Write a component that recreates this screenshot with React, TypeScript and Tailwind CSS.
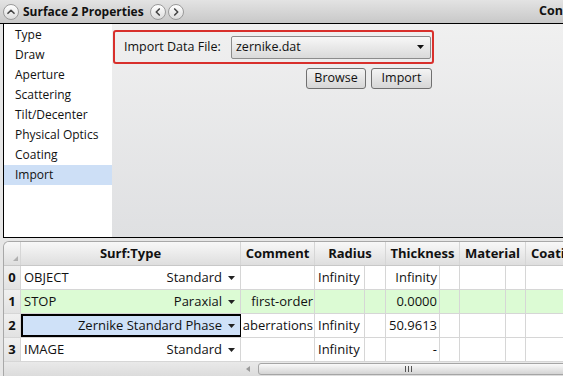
const navItems = ['Type', 'Draw', 'Aperture', 'Scattering', 'Tilt/Decenter', 'Physical Optics', 'Coating', 'Import'];

type Row = {
  n: number;
  label: string;
  type: string;
  comment: string;
  radius: string;
  thickness: string;
  bg: string;
  selected?: boolean;
};

const rows: Row[] = [
  { n: 0, label: 'OBJECT', type: 'Standard', comment: '', radius: 'Infinity', thickness: 'Infinity', bg: 'bg-white' },
  { n: 1, label: 'STOP', type: 'Paraxial', comment: 'first-order', radius: '', thickness: '0.0000', bg: 'bg-[#dcfbd4]' },
  { n: 2, label: '', type: 'Zernike Standard Phase', comment: 'aberrations', radius: 'Infinity', thickness: '50.9613', bg: 'bg-white', selected: true },
  { n: 3, label: 'IMAGE', type: 'Standard', comment: '', radius: 'Infinity', thickness: '-', bg: 'bg-white' },
];

const Caret = () => (
  <svg width="7" height="4" viewBox="0 0 7 4" className="ml-[6px] shrink-0">
    <path d="M0 0 L7 0 L3.5 4 Z" fill="#222" />
  </svg>
);

const CircleBtn = ({ dir }: { dir: 'up' | 'left' | 'right' }) => {
  const d = dir === 'up' ? 'M4.5 9.5 L8 6 L11.5 9.5' : dir === 'left' ? 'M9.5 4.5 L6 8 L9.5 11.5' : 'M6.5 4.5 L10 8 L6.5 11.5';
  return (
    <div className="w-[16px] h-[16px] rounded-full border border-[#9a9a9a] bg-gradient-to-b from-[#ffffff] to-[#dcdcdc] flex items-center justify-center">
      <svg width="16" height="16" viewBox="0 0 16 16">
        <path d={d} fill="none" stroke="#444" strokeWidth="1.8" strokeLinecap="round" strokeLinejoin="round" />
      </svg>
    </div>
  );
};

const cell = 'h-full border-r border-[#d6d6d6] flex items-center shrink-0 whitespace-nowrap overflow-hidden';

export default function App() {
  return (
    <div className="w-[563px] h-[376px] overflow-hidden bg-[#e6e6e6] text-[12px] text-[#111] font-['Open_Sans',sans-serif] leading-none flex flex-col">
      {/* Title bar */}
      <div className="h-[24px] shrink-0 flex items-center bg-gradient-to-b from-[#e3e3e3] to-[#c8c8c8] border-b border-black pl-[3px]">
        <CircleBtn dir="up" />
        <span className="ml-[4px] font-bold text-[12px]">Surface 2 Properties</span>
        <div className="ml-[6px] flex gap-[2px]">
          <CircleBtn dir="left" />
          <CircleBtn dir="right" />
        </div>
        <span className="ml-auto font-bold text-[12.5px] w-[24px] overflow-hidden whitespace-nowrap">Con</span>
      </div>

      {/* Properties panel */}
      <div className="h-[214px] shrink-0 flex ml-[3px] border-l border-b border-black">
        <div className="w-[108px] bg-white pt-[1px]">
          {navItems.map((item) => (
            <div
              key={item}
              className={`h-[20px] flex items-center pl-[11px] ${item === 'Import' ? 'bg-[#cddff6]' : ''}`}
            >
              {item}
            </div>
          ))}
        </div>
        <div className="flex-1 bg-gradient-to-b from-[#f0f0f0] to-[#dfe0e2] pt-[6px] pl-[1px]">
          <div className="w-[321px] h-[34px] border-[2.5px] border-[#d8302c] rounded-[3px] flex items-center pl-[9px] pr-[1px] text-[12.5px]">
            <span>Import Data File:</span>
            <div className="ml-auto w-[200px] h-[23px] border border-[#8c8c8c] rounded-[2px] bg-gradient-to-b from-[#f7f7f7] to-[#dadada] flex items-center pl-[4px] pr-[6px]">
              <span>zernike.dat</span>
              <svg width="7" height="4" viewBox="0 0 7 4" className="ml-auto">
                <path d="M0 0 L7 0 L3.5 4 Z" fill="#111" />
              </svg>
            </div>
          </div>
          <div className="w-[321px] flex justify-end gap-[5px] mt-[4px] pr-[2px] text-[12.5px]">
            <button className="w-[60px] h-[21px] border border-[#707070] rounded-[3px] bg-gradient-to-b from-[#f4f4f4] to-[#d6d6d6]">Browse</button>
            <button className="w-[61px] h-[21px] border border-[#707070] rounded-[3px] bg-gradient-to-b from-[#f4f4f4] to-[#d6d6d6]">Import</button>
          </div>
        </div>
      </div>

      {/* Lens data table */}
      <div className="mt-[3px] ml-[3px] flex-1 flex flex-col border-l border-t border-[#a8a8a8] rounded-tl-[6px] overflow-hidden bg-[#e4e4e4] text-[13px]">
        <div className="h-[24px] shrink-0 flex font-bold bg-gradient-to-b from-[#f8f8f8] to-[#dedede] border-b border-[#c8c8c8]">
          <div className={`${cell} w-[17px] justify-end items-end pb-[4px] pr-[2px]`}>
            <svg width="5" height="5" viewBox="0 0 5 5">
              <path d="M5 0 L5 5 L0 5 Z" fill="#b0b0b0" />
            </svg>
          </div>
          <div className={`${cell} w-[220px] justify-center`}>Surf:Type</div>
          <div className={`${cell} w-[74px] justify-center`}>Comment</div>
          <div className={`${cell} w-[71px] justify-center`}>Radius</div>
          <div className={`${cell} w-[74px] justify-center`}>Thickness</div>
          <div className={`${cell} w-[66px] justify-center`}>Material</div>
          <div className={`${cell} w-[80px] pl-[5px]`}>Coating</div>
        </div>
        {rows.map((r) => (
          <div key={r.n} className={`h-[24px] shrink-0 flex border-b border-[#d6d6d6] ${r.bg}`}>
            <div className={`${cell} w-[17px] justify-center font-bold bg-gradient-to-b from-[#f0f0f0] to-[#e2e2e2]`}>{r.n}</div>
            <div
              className={`${cell} w-[220px] pl-[3px] pr-[5px] ${r.selected ? 'border-2 border-black bg-[#cfe1f8]' : ''}`}
            >
              <span>{r.label}</span>
              <span className="ml-auto">{r.type}</span>
              <Caret />
            </div>
            <div className={`${cell} w-[74px] justify-end pr-[1px]`}>{r.comment}</div>
            <div className={`${cell} w-[50px] pl-[3px]`}>{r.radius}</div>
            <div className={`${cell} w-[21px]`} />
            <div className={`${cell} w-[54px] justify-end pr-[2px]`}>{r.thickness}</div>
            <div className={`${cell} w-[20px]`} />
            <div className={`${cell} w-[46px]`} />
            <div className={`${cell} w-[20px]`} />
            <div className={`${cell} w-[80px]`} />
          </div>
        ))}
        {/* horizontal scrollbar */}
        <div className="flex-1 flex items-center pl-[242px] bg-gradient-to-b from-[#e9e9e9] to-[#dcdcdc]">
          <svg width="4" height="6" viewBox="0 0 4 6">
            <path d="M4 0 L4 6 L0 3 Z" fill="#9a9a9a" />
          </svg>
          <div className="ml-[8px] flex-1 h-[12px] mr-[-8px] rounded-l-[3px] border border-[#a5a5a5] bg-gradient-to-b from-[#fafafa] to-[#d4d4d4] flex items-center pl-[146px]">
            <svg width="7" height="6" viewBox="0 0 7 6">
              <path d="M0.5 0 V6 M3.5 0 V6 M6.5 0 V6" stroke="#555" strokeWidth="1" />
            </svg>
          </div>
        </div>
      </div>
    </div>
  );
}
